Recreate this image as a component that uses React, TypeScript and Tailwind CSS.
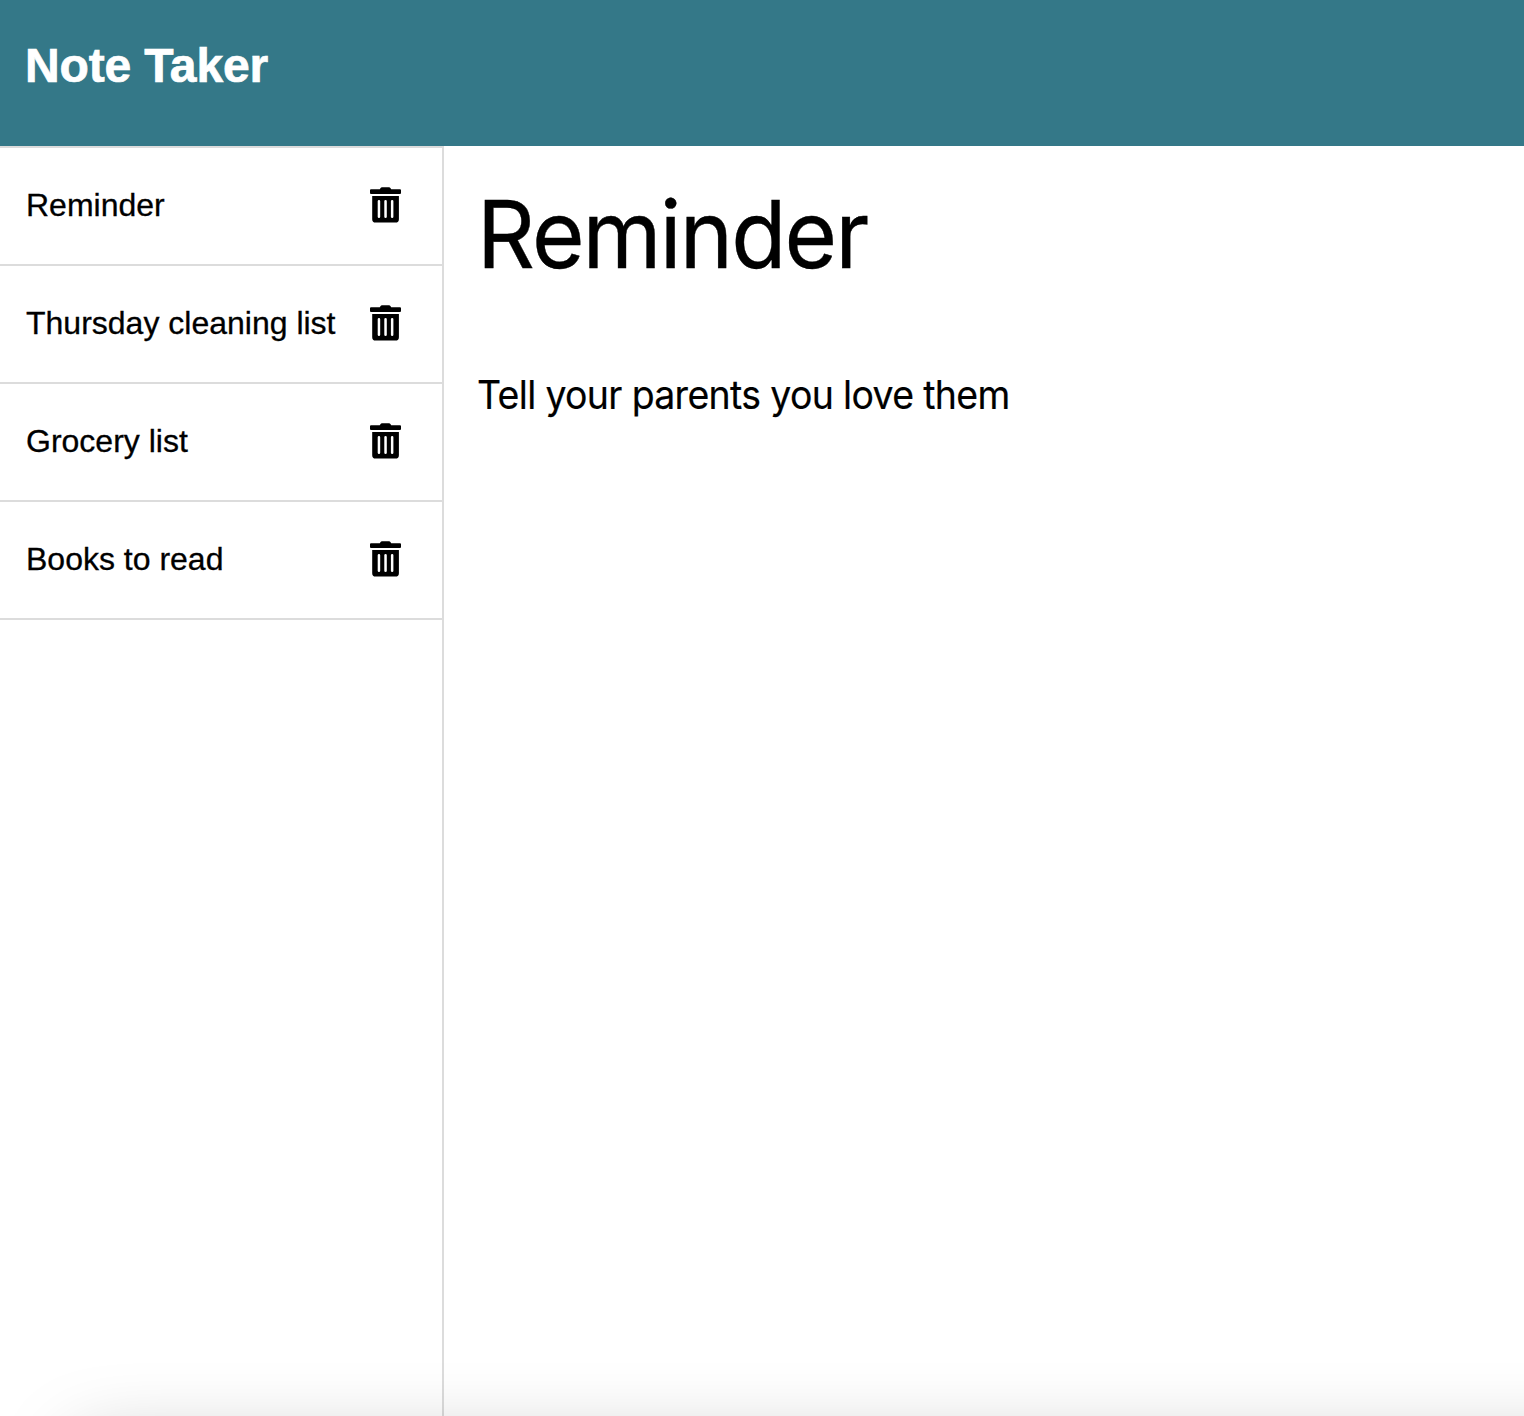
const notes = ['Reminder', 'Thursday cleaning list', 'Grocery list', 'Books to read'];

function TrashIcon() {
  return (
    <svg className="h-9 w-[31px] shrink-0" viewBox="0 0 31 36" fill="#000">
      <path d="M1 2.300H9.800L10.600 0.900Q11 0.200 12 0.200H19Q20 0.200 20.400 0.900L21.200 2.300H30Q31 2.300 31 3.200V6Q31 6.900 30 6.900H1Q0 6.900 0 6V3.200Q0 2.300 1 2.300Z" />
      <path fillRule="evenodd" d="M2.200 9H28.900V32.200Q28.900 35.600 25.500 35.600H5.600Q2.200 35.600 2.200 32.200ZM9 13Q7.700 13 7.700 14.200V29.800Q7.700 31 9 31Q10.200 31 10.200 29.800V14.200Q10.200 13 9 13ZM15.600 13Q14.300 13 14.300 14.200V29.800Q14.300 31 15.600 31Q16.800 31 16.800 29.800V14.200Q16.800 13 15.600 13ZM22.200 13Q20.900 13 20.900 14.200V29.800Q20.900 31 22.200 31Q23.400 31 23.400 29.800V14.200Q23.400 13 22.200 13Z" />
    </svg>
  );
}

export default function App() {
  return (
    <div className="relative flex h-[1416px] w-full flex-col overflow-hidden bg-white font-['Liberation_Sans',Arial,sans-serif] text-black">
      <header className="h-[146px] shrink-0 bg-[#347888] px-[25px] pt-[31px]">
        <h1 className="text-[48px] leading-[70px] font-bold tracking-[-0.15px] text-white [-webkit-text-stroke:0.7px_white]">Note Taker</h1>
      </header>
      <main className="flex min-h-0 flex-1">
        <aside className="w-[444px] shrink-0 border-r-2 border-[#dcdcdc]">
          <ul className="border-t-2 border-[#dcdcdc]">
            {notes.map((note) => (
              <li key={note} className="flex h-[118px] items-center justify-between border-b-2 border-[#dcdcdc] pr-[41px] pb-[2px] pl-[26px]">
                <span className="text-[32px] leading-[48px] whitespace-nowrap [-webkit-text-stroke:0.3px_black]">{note}</span>
                <button aria-label={`Delete ${note}`}><TrashIcon /></button>
              </li>
            ))}
          </ul>
        </aside>
        <section className="pt-7 pl-[33px] font-[Inter,sans-serif]">
          <h2 className="origin-left scale-x-[0.96] text-[94px] leading-[120px] tracking-[-1.95px] [-webkit-text-stroke:0.4px_black]">Reminder</h2>
          <p className="mt-[71px] origin-left scale-x-[0.96] text-[39px] leading-[60px] tracking-[-0.69px] [-webkit-text-stroke:0.2px_black]">Tell your parents you love them</p>
        </section>
      </main>
      <div className="pointer-events-none absolute -right-[200px] -bottom-[330px] left-[78px] h-[300px] rounded-lg shadow-[0_0_80px_rgba(0,0,0,0.27)]" />
    </div>
  );
}
